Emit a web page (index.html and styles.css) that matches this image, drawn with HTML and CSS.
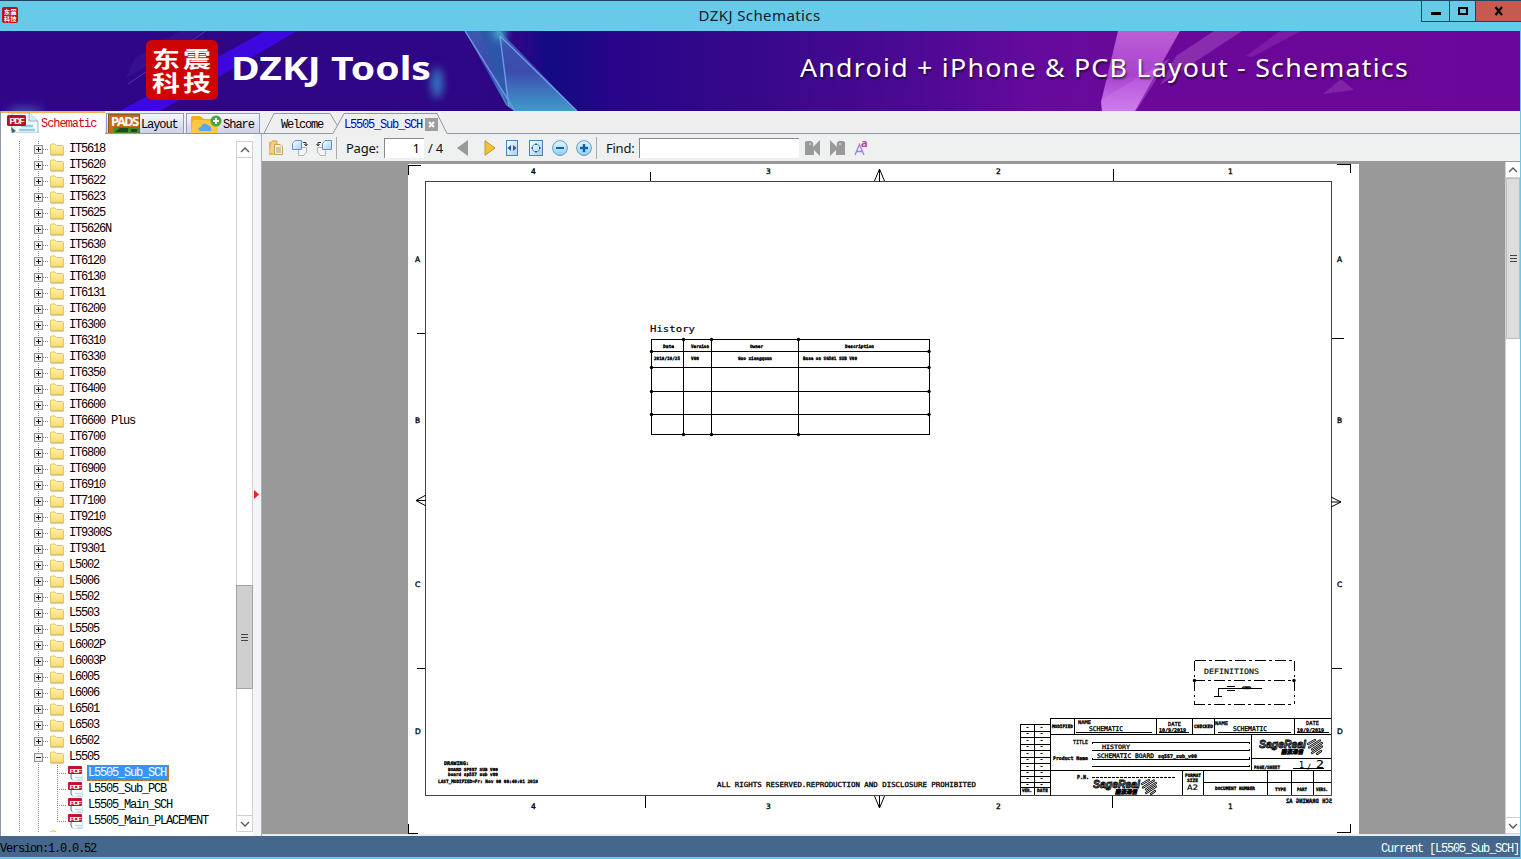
FILE: index.html
```html
<!DOCTYPE html>
<html lang="en">
<head>
<meta charset="utf-8">
<title>DZKJ Schematics</title>
<link rel="stylesheet" href="styles.css">
</head>
<body>
<svg class="defs" width="0" height="0">
  <defs>
    <linearGradient id="gold" x1="0" y1="0" x2="0" y2="1"><stop offset="0" stop-color="#fff0a8"/><stop offset="1" stop-color="#f5d878"/></linearGradient>
    <linearGradient id="ball" x1="0" y1="0" x2="0" y2="1"><stop offset="0" stop-color="#e8f6ff"/><stop offset="1" stop-color="#8fcdf5"/></linearGradient>
    <linearGradient id="paper" x1="0" y1="0" x2="1" y2="1"><stop offset="0" stop-color="#fff"/><stop offset="1" stop-color="#9fd0f5"/></linearGradient>
    <symbol id="folder" viewBox="0 0 14 12"><path d="M.5 1.5Q.5.5 1.500.5H5L6.500 2H13Q13.500 2 13.500 3V11.500H.5Z" fill="url(#gold)" stroke="#e6c566"/><path d="M1 11.500H13.500" stroke="#d9b355"/></symbol>
    <symbol id="plus" viewBox="0 0 9 9"><rect x=".5" y=".5" width="8" height="8" fill="#eee" stroke="#919191"/><path d="M2 4.500H7M4.500 2V7" stroke="#222"/></symbol>
    <symbol id="minus" viewBox="0 0 9 9"><rect x=".5" y=".5" width="8" height="8" fill="#eee" stroke="#919191"/><path d="M2 4.500H7" stroke="#222"/></symbol>
    <symbol id="pdf" viewBox="0 0 16 16"><path d="M4.500 8V15.500H15.500V3" fill="#fff" stroke="#d5e9f3"/><path d="M8 12.500H15M10 15H15" stroke="#b5daec" stroke-width="1.500"/><path d="M4 9V13L5.500 14.500" stroke="#5b7896" fill="none"/><rect x="1" y="1" width="14" height="8" rx="1" fill="#c4122c"/><text x="2.500" y="7.500" class="pdf-s" textLength="11" lengthAdjust="spacingAndGlyphs">PDF</text></symbol>
    <symbol id="sage" viewBox="0 0 64 16"><text x="0" y="9" class="sage" textLength="47" lengthAdjust="spacingAndGlyphs">SageReal</text><text x="22" y="15" class="sage-cn" textLength="22" lengthAdjust="spacingAndGlyphs">酷派通信</text><g fill="none" stroke="#000" stroke-linecap="round"><path d="M49 5L56 1M50 8.500L61 1.500M53 10.500L63 4M53 14L63 7.500M58 15L62 12" stroke-width="2.200"/><path d="M49 5L56 1M50 8.500L61 1.500M53 10.500L63 4M53 14L63 7.500M58 15L62 12" stroke="#fff" stroke-width=".8"/></g></symbol>
  </defs>
</svg>

<div class="window">
  <header class="titlebar">
    <svg class="app-icon" viewBox="0 0 16 16"><rect width="16" height="16" rx="2" fill="#c80b0b"/><g class="seal-s"><text x="2" y="7.300">东</text><text x="8.500" y="7.300">震</text><text x="2" y="13.800">科</text><text x="8.500" y="13.800">技</text></g></svg>
    <span class="caption">DZKJ Schematics</span>
    <div class="win-btns">
      <span class="wb min"><svg width="12" height="12"><rect x="1" y="7" width="10" height="3"/></svg></span>
      <span class="wb max"><svg width="12" height="12"><rect x="2" y="3" width="8" height="6" fill="none" stroke="#000" stroke-width="2"/></svg></span>
      <span class="wb close"><svg width="12" height="12"><path d="M2.500 2L9 10M9 2L2.500 10" stroke="#000" stroke-width="2.200"/></svg></span>
    </div>
  </header>

  <svg class="banner" viewBox="0 31 1520 80">
    <defs>
      <linearGradient id="bg"><stop offset="0" stop-color="#300687"/><stop offset=".34" stop-color="#2d0686"/><stop offset=".36" stop-color="#140a84"/><stop offset=".38" stop-color="#1a0984"/><stop offset=".4" stop-color="#27048a"/><stop offset=".49" stop-color="#360889"/><stop offset=".6" stop-color="#4c0993"/><stop offset=".68" stop-color="#650a9c"/><stop offset=".76" stop-color="#6b0899"/><stop offset="1" stop-color="#6a0699"/></linearGradient>
      <linearGradient id="crys" x1="0" y1="0" x2="0" y2="1"><stop offset="0" stop-color="#3c58b0"/><stop offset=".5" stop-color="#3b4bae"/><stop offset="1" stop-color="#3f9cc9"/></linearGradient>
      <linearGradient id="pink" x1="0" y1="0" x2="0" y2="1"><stop offset="0" stop-color="#bb5ed3"/><stop offset=".55" stop-color="#a942cf"/><stop offset="1" stop-color="#ca78ee"/></linearGradient>
      <filter id="soft" x="-2" y="-2" width="5" height="5"><feGaussianBlur stdDeviation="4"/></filter>
    </defs>
    <rect y="31" width="1521" height="80" fill="url(#bg)"/>
    <path d="M120 111L265 31H297L160 111Z" fill="#3c08df"/>
    <path d="M135 58L180 31H206L126 78Z" fill="#42229b" opacity=".35"/>
    <path d="M128 84L206 31" stroke="#635bc2" opacity=".6"/>
    <ellipse cx="437" cy="83" rx="6" ry="15" fill="#3477c1" filter="url(#soft)"/>
    <ellipse cx="25" cy="112" rx="18" ry="5" fill="#3d4fa7" filter="url(#soft)"/>
    <path d="M465 31H500L577 111H514L506 105Z" fill="url(#crys)"/>
    <path d="M480 31H500L504 78L508 107Z" fill="#285aa6" opacity=".75"/>
    <path d="M465 31L515 111M500 36L577 111M500 36L509 107" stroke="#7298e4" fill="none" stroke-width="1.400"/>
    <circle cx="500" cy="33" r="6" fill="#55c1dc" filter="url(#soft)"/>
    <path d="M1118 31H1180L1135 111H1102L1101 102Z" fill="url(#pink)"/>
    <path d="M1176 56L1214 31H1242L1160 85Z" fill="#9338b5" opacity=".75"/>
    <path d="M1246 56L1280 31H1301L1252 57Z" fill="#8524ae" opacity=".7"/>
    <path d="M1323 94L1341 79L1354 90Z" fill="#8931ac" opacity=".7"/>
    <path d="M1101 100L1170 58L1136 111H1102Z" fill="#d181ed" opacity=".32"/>
    <rect x="146" y="40" width="72" height="60" rx="6" fill="#ce0404"/>
    <g class="seal"><text x="152" y="67" textLength="28" lengthAdjust="spacingAndGlyphs">东</text><text x="183" y="67" textLength="28" lengthAdjust="spacingAndGlyphs">震</text><text x="152" y="91" textLength="28" lengthAdjust="spacingAndGlyphs">科</text><text x="183" y="91" textLength="28" lengthAdjust="spacingAndGlyphs">技</text></g>
    <text x="231" y="80" class="brand" textLength="200" lengthAdjust="spacingAndGlyphs">DZKJ Tools</text>
    <text x="800" y="76.500" class="slogan" textLength="609" lengthAdjust="spacingAndGlyphs">Android + iPhone &amp; PCB Layout - Schematics</text>
  </svg>

  <div class="main">
    <aside class="side">
      <nav class="tabs">
        <div class="tab on"><svg width="32" height="20" viewBox="0 0 32 20"><path d="M5 0H22L31 8V20H5Z" fill="#f2fafd" stroke="#9ab6ca"/><path d="M22 0V8H31" fill="#d6eaf5" stroke="#9ab6ca"/><path d="M14 13H26M12 17H28" stroke="#94cbe8" stroke-width="2.500"/><path d="M4 14L9 18L5 20Z" fill="#3d607d"/><rect y="2" width="19" height="11" rx="1.500" fill="#b8122b"/><text x="2.500" y="11" class="pdf-l" textLength="14" lengthAdjust="spacingAndGlyphs">PDF</text></svg><span>Schematic</span></div>
        <div class="tab lay"><svg width="32" height="19" viewBox="0 0 32 19"><rect x=".5" y=".5" width="31" height="20" fill="#c46a1c" stroke="#8d5719"/><rect x="6" y="13" width="25" height="6" fill="#3f8e2c"/><path d="M7 18L12 14H20V18M23 15H29V18H23Z" fill="#20491c"/><text x="3" y="11.500" class="pads" textLength="27" lengthAdjust="spacingAndGlyphs">PADS</text></svg><span>Layout</span></div>
        <div class="tab shr"><svg width="32" height="19" viewBox="0 0 32 19"><path d="M1 4Q1 2 3 2H10L14 5H28V19H1Z" fill="#f3ad20"/><path d="M1 19L3 6H15L28 8V19Z" fill="#ffc843"/><path d="M10 17Q6 14 11 13Q13 7 18 11Q22 12 21 17Z" fill="#5aa8ec"/><circle cx="26" cy="7" r="5.500" fill="#45a83c"/><path d="M23 7H29M26 4V10" stroke="#fff" stroke-width="2"/></svg><span>Share</span></div>
      </nav>
      <div class="side-body">
        <div class="tree" id="tree"></div>
        <div class="sbar">
          <span class="arr"><svg width="10" height="6"><path d="M1 5L5 1L9 5" fill="none" stroke="#555" stroke-width="1.300"/></svg></span>
          <span class="side-thumb"><i></i><i></i><i></i></span>
          <span class="arr low"><svg width="10" height="6"><path d="M1 1L5 5L9 1" fill="none" stroke="#555" stroke-width="1.300"/></svg></span>
        </div>
      </div>
    </aside>
    <div class="splitter"><svg width="5" height="9"><path d="M0 0L5 4.500L0 9Z" fill="#e8231c"/></svg></div>

    <section class="view">
      <div class="doc-tabs">
        <svg class="tab-lines" viewBox="0 0 1258 23"><path d="M0 22.500H2L12 2.500H68L75 14M2 22.500H71L82 2.500H175L185 22.500H1258" fill="none" stroke="#8d9ba9"/></svg>
        <span class="dt">Welcome</span><span class="dt cur">L5505_Sub_SCH</span>
        <svg class="x" width="13" height="13"><rect width="13" height="13" fill="#9e9e9e"/><path d="M4 4L9 9M9 4L4 9" stroke="#fff" stroke-width="1.800"/></svg>
      </div>
      <div class="toolbar">
        <svg width="16" height="16" viewBox="0 0 16 16"><path d="M1 2L6 1V14L1 15Z" fill="#e5b456"/><path d="M4 1H9V14H1" fill="#f4cf7e" stroke="#d6a24b"/><path d="M6.500 4.500H12L14.500 7V14.500H6.500Z" fill="#fdf3d0" stroke="#c99e50"/><path d="M8 8H13M8 10H13M8 12H13" stroke="#9a9a8a"/></svg>
        <svg class="g8" width="16" height="16" viewBox="0 0 16 16"><path d="M6.500 7.500H14.500V12L11.500 15.500H6.500Z" fill="#f4f4f4" stroke="#b4b4b4"/><path d="M.5 3.500L3 .5H9.500V9.500H.5Z" fill="url(#paper)" stroke="#6790be"/><path d="M11 2.500H14V5M12.500 4L14 6L15.500 4" stroke="#333" fill="none"/></svg>
        <svg class="g8" width="16" height="16" viewBox="0 0 16 16"><path d="M1.500 7.500H9.500V15.500H4.500L1.500 12Z" fill="#f4f4f4" stroke="#b4b4b4"/><path d="M6.500 3.500L9 .5H15.500V9.500H6.500Z" fill="url(#paper)" stroke="#6790be"/><path d="M5 2.500H2V5M.5 4L2 6L3.500 4" stroke="#333" fill="none"/></svg>
        <i class="sep s1"></i><span class="lbl page">Page:</span><span class="inp pg">1</span><span class="lbl of">/ 4</span>
        <svg class="pv" width="12" height="16"><path d="M11 0V16L0 8Z" fill="#999"/></svg>
        <svg class="nx" width="12" height="16"><path d="M1 .7V15.300L11 8Z" fill="#f0c23c" stroke="#c79530"/></svg>
        <svg class="fw" width="12" height="16"><rect x=".5" y=".5" width="11" height="15" fill="url(#paper)" stroke="#5080b5"/><path d="M5 5V11L1.500 8ZM7 5V11L10.500 8Z" fill="#245e9c"/></svg>
        <svg class="fp" width="14" height="16"><rect x=".5" y=".5" width="13" height="15" fill="url(#paper)" stroke="#5080b5"/><path d="M7 3L9 5H5ZM7 13L9 11H5ZM2 8L4 6V10ZM12 8L10 6V10Z" fill="#245e9c"/><path d="M4 5.500V5H4.500M9.500 5H10V5.500M10 10.500V11H9.500M4.500 11H4V10.500" fill="none" stroke="#245e9c"/></svg>
        <svg class="zo" width="16" height="16"><circle cx="8" cy="8" r="7.400" fill="url(#ball)" stroke="#5f9dc4"/><path d="M4 8H12" stroke="#1063a5" stroke-width="2"/></svg>
        <svg class="g8" width="16" height="16"><circle cx="8" cy="8" r="7.400" fill="url(#ball)" stroke="#5f9dc4"/><path d="M4 8H12M8 4V12" stroke="#1063a5" stroke-width="2.400"/></svg>
        <i class="sep s2"></i><span class="lbl find">Find:</span><span class="inp fi"></span>
        <svg class="fl" width="15" height="16"><path d="M0 2L2 1H6Q9 2 8 7L15 0V16L9 10V15H0Z" fill="#999"/><path d="M4 4H6" stroke="#eee"/></svg>
        <svg class="fr" width="15" height="16"><path d="M15 2L13 1H9Q6 2 7 7L0 0V16L6 10V15H15Z" fill="#999"/><path d="M9 4H11" stroke="#eee"/></svg>
        <svg class="aa" width="14" height="16" viewBox="0 0 14 16"><path d="M1 15L5.500 4.500L10 15M2.500 11.500H8.500" fill="none" stroke="#9b7df0" stroke-width="1.300"/><text x="7" y="7" class="aa-t">a</text></svg>
      </div>
      <div class="canvas">
        <svg class="sheet" viewBox="408 164 951 670">
          <rect x="408" y="164" width="951" height="670" fill="#fff"/>
          <g fill="none" stroke="#000" shape-rendering="crispEdges">
            <rect x="425.500" y="181.500" width="906" height="614" stroke="#444"/>
            <path d="M408.500 175V165.500H421M1337 164.500H1350.500V173M408.500 824V833.500H418M1337 832.500H1350.500V824"/>
            <path d="M650.500 172V181M1113.500 169V181M645.500 796V808M1112.500 796V808M417 333.500H425M417 668.500H425M1332 338.500H1344M1332 668.500H1342"/>
            <path d="M651.500 339.500H929.500V434.500H651.500ZM651 351.500H929M651 367.500H929M651 391.500H929M651 414.500H929M683.500 339V434M711.500 339V434M798.500 339V434"/>
          </g>
          <g fill="none" stroke="#000"><path d="M874.500 181L879.500 169L884.500 181M879.500 169V182M874.500 796L879.500 808L884.500 796M879.500 796V808M426 495L416 500.500L426 506M416 500.500H426M1331 497L1341 502L1331 507M1331 502H1341"/></g>
          <g id="dots"></g>
          <g class="grid-n"><text x="531" y="174">4</text><text x="766" y="174">3</text><text x="996" y="174">2</text><text x="1228" y="174">1</text><text x="531" y="809">4</text><text x="766" y="809">3</text><text x="996" y="809">2</text><text x="1228" y="809">1</text><text x="415" y="262">A</text><text x="415" y="423">B</text><text x="415" y="587">C</text><text x="415" y="734">D</text><text x="1337" y="262">A</text><text x="1337" y="423">B</text><text x="1337" y="587">C</text><text x="1337" y="734">D</text></g>
          <g id="labels"></g>
          <g fill="none" stroke="#000" shape-rendering="crispEdges">
            <path d="M1194.500 660.500H1294M1194 680.500H1294M1194 704.500H1294" stroke-dasharray="11 3 3 3"/>
            <path d="M1194.500 661V704M1294.500 661V704" stroke-dasharray="10 4 2 4"/>
            <path d="M1218.500 696V688.500H1262M1214 696.500H1222M1227 686.500H1235M1227 690.500H1235"/>
            <path d="M1020.500 795V724.500H1050M1034.500 724V795M1020 731.500H1050M1020 737.500H1050M1020 744.500H1050M1020 750.500H1050M1020 757.500H1050M1020 763.500H1050M1020 770.500H1050M1020 776.500H1050M1020 782.500H1050M1020 787.500H1050M1050.500 718V796M1050 718.500H1331M1050 734.500H1331M1050 770.500H1331M1074.500 718V734M1156.500 718V734M1192.500 718V734M1214.500 718V734M1294.500 718V734M1251.500 734V770M1251 758.500H1331M1182.500 770V795M1203.500 770V795M1204 782.500H1331M1267.500 770V795M1291.500 770V795M1313.500 770V795"/>
            <path d="M1076 732.500H1152M1159 732.500H1189M1218 732.500H1291M1297 732.500H1329M1092 743.500V742.500H1249V744M1092 751V750.500H1249V749M1092 758V759.500H1249V757M1092 766.500H1249V765M1293 768.500H1324"/>
            <path d="M1092 777.500H1176" stroke-dasharray="3 1"/>
          </g>
          <use href="#sage" x="1259" y="739" width="64" height="16"/><use href="#sage" x="1093" y="779" width="64" height="16"/>
          <g transform="translate(1332 803) scale(-1 1)"><text y="0" class="cad heavy" font-size="6" textLength="46" lengthAdjust="spacingAndGlyphs">SCH DRAWING A2</text></g>
        </svg>
        <div class="vbar">
          <span class="arr"><svg width="10" height="6"><path d="M1 5L5 1L9 5" fill="none" stroke="#555" stroke-width="1.300"/></svg></span>
          <span class="doc-thumb"><i></i><i></i><i></i></span>
          <span class="arr low"><svg width="10" height="6"><path d="M1 1L5 5L9 1" fill="none" stroke="#555" stroke-width="1.300"/></svg></span>
        </div>
      </div>
    </section>
  </div>
  <footer class="status"><span>Version:1.0.0.52</span><span>Current [L5505_Sub_SCH]</span></footer>
</div>
<script src="app.js"></script>
</body>
</html>
```
FILE: styles.css
```css
* { box-sizing: border-box; }
body { margin: 0; overflow: hidden; background: #67cae9; }
svg { display: block; flex: none; }
.defs { position: absolute; }
.window { width: 1521px; height: 859px; display: flex; flex-direction: column; padding-right: 1px; padding-bottom: 2px; background: #67cae9; }

.titlebar { position: relative; height: 31px; flex: none; display: flex; justify-content: space-between; border-top: 1px solid #1c4660; background: #67cae9; margin-right: -1px; }
.app-icon { width: 16px; height: 16px; margin: 6px 0 0 2px; }
.seal-s { font: bold 6px "Noto Sans CJK SC", sans-serif; fill: #fff; }
.caption { font: 15px/28px "Noto Sans", sans-serif; letter-spacing: .4px; color: #10202a; margin-left: 80px; }
.win-btns { display: flex; height: 21px; border-left: 1px solid #184558; border-bottom: 1px solid #184558; }
.wb { display: flex; align-items: center; justify-content: center; width: 28px; border-right: 1px solid #184558; }
.wb.max { width: 26px; }
.wb.close { width: 45px; border: 0; background: #c75a50; }

.banner { width: 1520px; height: 80px; flex: none; }
.seal { font: bold 22px "Noto Sans CJK SC", sans-serif; fill: #fff; }
.brand { font: bold 32px "Noto Sans", sans-serif; fill: #fff; }
.slogan { font: 26px "Noto Sans", sans-serif; letter-spacing: 1.2px; fill: #fff; text-shadow: 1px 2px 2px rgba(0, 0, 0, .6); }

.main { flex: 1; min-height: 0; display: flex; background: #efefef; }
.side { width: 253px; display: flex; flex-direction: column; background: #fff; border-left: 1px solid #8d9ba9; }
.tabs { height: 23px; flex: none; display: flex; width: 261px; background: #efefef; border-bottom: 1px solid #8d9ba9; }
.tab, .dt, .tree, .status { font: 12px/16px "Liberation Mono", monospace; letter-spacing: -1.2px; white-space: pre; color: #000; }
.tab { display: flex; align-items: center; height: 20px; margin-top: 2px; border: 1px solid #8f9ab8; border-bottom: 0; background: linear-gradient(#f7f7fc, #cfd1e6); }
.tab svg { align-self: flex-start; }
.tab span { padding-top: 2px; }
.tab.on { width: 104px; height: 23px; margin: 0; padding-left: 6px; border: 0; border-top: 2px solid #f5b04d; background: #fff; color: #d0021b; }
.tab.on span { margin-left: 2px; letter-spacing: -1.05px; padding: 0; }
.tab.lay { width: 78px; padding-left: 1px; margin-left: 1px; }
.tab.lay span { margin-left: 1px; letter-spacing: -1.1px; }
.tab.shr { width: 74px; margin-left: 2px; padding-left: 3px; }
.tab.shr span { margin-left: 1px; letter-spacing: -1px; }
.pdf-s { font: bold 6px "Liberation Sans", sans-serif; fill: #fff; }
.pdf-l { font: bold 9px "Liberation Sans", sans-serif; fill: #fff; }
.pads { font: bold 11.5px "Noto Sans", sans-serif; fill: #fff; }

.side-body { flex: 1; min-height: 0; display: flex; padding: 7px 0 4px 6px; }
.tree { flex: 1; height: 691px; overflow: hidden; background: repeating-linear-gradient(#8a8a8a 0 1px, transparent 1px 2px) 12px 0 / 1px 100% no-repeat, repeating-linear-gradient(#8a8a8a 0 1px, transparent 1px 2px) 31px 0 / 1px 100% no-repeat; }
.row { display: flex; align-items: center; height: 16px; padding-left: 27px; }
.row .box { width: 9px; height: 9px; }
.row .lead { width: 5px; margin-right: 2px; border-top: 1px dotted #8a8a8a; }
.row .fold { width: 14px; height: 13px; }
.row b { font-weight: normal; margin-left: 4px; height: 16px; padding: 1px 1px 0; line-height: 15px; }
.row.leaf { padding-left: 50px; }
.row.leaf .lead { width: 10px; height: 16px; margin: 0; border: 0; background: repeating-linear-gradient(#8a8a8a 0 1px, transparent 1px 2px) 0 0 / 1px 100% no-repeat, repeating-linear-gradient(90deg, #8a8a8a 0 1px, transparent 1px 2px) 0 8px / 100% 1px no-repeat; }
.row.leaf.last .lead { background-size: 1px 9px, 100% 1px; }
.row .pdf { width: 16px; height: 16px; }
.row.leaf b { margin-left: 4px; padding-left: 1px; }
.row.sel b { width: 82px; background: #3296fb; color: #fff; outline: 1px dotted #c4711b; outline-offset: -1px; }
.row.cut { align-items: flex-start; }
.row.cut .fold { margin: 1px 0 0 16px; }

.sbar, .vbar { display: flex; flex-direction: column; align-items: center; background: #fff; border: 1px solid #d2d2d2; }
.sbar { width: 17px; height: 691px; }
.arr { width: 100%; height: 16px; flex: none; display: flex; align-items: center; justify-content: center; border-bottom: 1px solid #cfcfcf; }
.arr.low { margin-top: auto; border-bottom: 0; border-top: 1px solid #cfcfcf; }
.side-thumb, .doc-thumb { display: flex; flex-direction: column; justify-content: center; align-items: center; gap: 2px; background: #dcdcdc; border: 1px solid #bdbdbd; }
.side-thumb { width: 17px; height: 104px; margin-top: 427px; background: #cfcfcf; border-color: #a3a3a3; flex: none; }
.side-thumb i, .doc-thumb i { width: 7px; height: 1px; background: #444; }
.splitter { width: 9px; background: #f4f5f8; border-right: 1px solid #a7b0bb; padding: 356px 0 0 1px; margin-top: 23px; }

.view { flex: 1; display: flex; flex-direction: column; min-width: 0; }
.doc-tabs { position: relative; height: 23px; flex: none; display: flex; align-items: center; padding: 3px 0 0 19px; }
.tab-lines { position: absolute; left: 0; top: 0; width: 1258px; height: 23px; }
.dt { width: 63px; position: relative; padding-top: 1px; }
.dt.cur { width: 81px; color: #0000d0; }
.x { position: relative; margin-top: 1px; }
.toolbar { height: 28px; flex: none; display: flex; align-items: center; padding: 1px 0 0 6px; border-bottom: 1px solid #999; background: #eff0f0; }
.lbl { font: 13px/18px "Noto Sans", sans-serif; letter-spacing: -.25px; color: #111; white-space: nowrap; }
.toolbar > * { flex: none; }
.g8 { margin-left: 8px; }
.sep { width: 1px; height: 22px; background: #aaa; }
.s1 { margin-left: 4px; }
.page { margin-left: 9px; width: 38px; }
.inp { height: 20px; background: #fff; border-top: 1px solid #888; border-left: 1px solid #888; }
.pg { width: 40px; text-align: right; padding-right: 4px; font: 13px/18px "Noto Sans", sans-serif; }
.of { margin-left: 4px; width: 29px; }
.nx { margin-left: 15px; }
.fw { margin-left: 10px; }
.fp { margin-left: 11px; }
.zo { margin-left: 9px; }
.s2 { margin-left: 4px; }
.find { margin-left: 9px; width: 33px; }
.fi { width: 160px; }
.fl { margin-left: 6px; }
.fr { margin-left: 10px; }
.aa { margin-left: 9px; overflow: visible; }
.aa-t { font: bold 11px "Noto Sans", sans-serif; fill: #bb3f9c; }

.canvas { flex: 1; min-height: 0; display: flex; justify-content: space-between; background: #999; border-bottom: 2px solid #e6edf3; }
.sheet { width: 951px; height: 670px; margin: 2px 0 0 146px; }
.vbar { width: 15px; border-top: 0; border-right: 0; }
.doc-thumb { width: 14px; height: 161px; flex: none; }
.grid-n { font: 7.5px "DejaVu Sans", sans-serif; stroke: #000; stroke-width: .35px; }
.cad { font-family: "DejaVu Sans Mono", monospace; fill: #000; stroke: #000; stroke-width: .3px; }
.cad.light { stroke-width: .15px; }
.cad.heavy { font-weight: bold; stroke-width: .35px; }
.sage { font: italic bold 11px "Liberation Sans", sans-serif; fill: #888; stroke: #000; stroke-width: .8px; }
.sage-cn { font: italic bold 6px "Noto Sans CJK SC", sans-serif; stroke: #000; stroke-width: .5px; }

.status { height: 21px; flex: none; display: flex; justify-content: space-between; align-items: center; background: #45678b; padding: 5px 1px 0 0; }
.status span + span { color: #fff; }
```
FILE: app.js
```js
const svg = (id, cls) => `<svg class="${cls}"><use href="#${id}"/></svg>`;

const folders = ['5618', '5620', '5622', '5623', '5625', '5626N', '5630', '6120', '6130', '6131', '6200', '6300', '6310', '6330', '6350', '6400', '6600', '6600 Plus', '6700', '6800', '6900', '6910', '7100', '9210', '9300S', '9301'].map(n => 'IT' + n)
  .concat(['5002', '5006', '5502', '5503', '5505', '6002P', '6003P', '6005', '6006', '6501', '6503', '6502', '5505'].map(n => 'L' + n));
const files = ['L5505_Sub_SCH', 'L5505_Sub_PCB', 'L5505_Main_SCH', 'L5505_Main_PLACEMENT'];

document.getElementById('tree').innerHTML =
  folders.map((n, i) => `<div class="row">${svg(i === folders.length - 1 ? 'minus' : 'plus', 'box')}<i class="lead"></i>${svg('folder', 'fold')}<b>${n}</b></div>`).join('') +
  files.map((n, i) => `<div class="row leaf${i === 0 ? ' sel' : ''}${i === 3 ? ' last' : ''}"><i class="lead"></i>${svg('pdf', 'pdf')}<b>${n}</b></div>`).join('') +
  `<div class="row cut">${svg('folder', 'fold')}</div>`;

// [text, x, baseline, width, size, weight class]
const labels = [
  ['History', 650, 332, 45, 8.5, 'light'],
  ['Date', 663, 348, 11, 4.5, 'heavy'], ['Version', 691, 348, 18, 4.5, 'heavy'], ['Owner', 750, 348, 13, 4.5, 'heavy'], ['Description', 845, 348, 29, 4.5, 'heavy'],
  ['2018/10/25', 654, 360, 26, 4.5, 'heavy'], ['V00', 691, 360, 8, 4.5, 'heavy'], ['Guo xiangquan', 738, 360, 34, 4.5, 'heavy'], ['Base on SG581 SUB V00', 803, 360, 54, 4.5, 'heavy'],
  ['DEFINITIONS', 1204, 674, 55, 7.5, 'light'], ['GND', 1242, 688.5, 9, 3.5, 'heavy'],
  ['DRAWING:', 444, 765, 25, 5, 'heavy'], ['BOARD SP557 SUB V00', 448, 771, 50, 4.2, 'heavy'], ['board sp557 sub v00', 448, 775.5, 50, 4.5, 'heavy'],
  ['LAST_MODIFIED=Fr: Nov 08 08:40:01 2019', 438, 783, 100, 4.5, 'heavy'],
  ['ALL RIGHTS RESERVED.REPRODUCTION AND DISCLOSURE PROHIBITED', 717, 787, 259, 7, ''],
  ['MODIFIED', 1052, 728, 21, 4.5, 'heavy'], ['NAME', 1078, 724, 13, 5, ''], ['SCHEMATIC', 1089, 731, 34, 6.5, ''],
  ['DATE', 1168, 726, 13, 5.5, ''], ['10/9/2019', 1159, 731.5, 27, 5.2, 'heavy'],
  ['CHECKED', 1194, 728, 19, 4.5, 'heavy'], ['NAME', 1215, 725, 13, 5, ''], ['SCHEMATIC', 1233, 731, 34, 6.5, ''],
  ['DATE', 1306, 725, 13, 5.5, ''], ['10/9/2019', 1297, 731.5, 27, 5.2, 'heavy'],
  ['TITLE', 1073, 744, 15, 5.5, ''], ['HISTORY', 1102, 749, 28, 6, ''], ['Product Name', 1053, 760, 35, 5, 'heavy'],
  ['SCHEMATIC BOARD', 1097, 758, 57, 6.2, ''], ['sq557_sub_v00', 1158, 758, 39, 5, 'heavy'], ['P.N.', 1077, 779, 12, 5.5, 'heavy'],
  ['VER.', 1022, 792, 10, 4.5, 'heavy'], ['DATE', 1037, 792, 11, 4.5, 'heavy'], ['PAGE/SHEET', 1254, 769, 26, 4.5, 'heavy'],
  ['1', 1299, 768, 5, 8, 'light'], ['/', 1307, 769, 4, 7, 'light'], ['2', 1316, 768, 8, 10, 'light'],
  ['FORMAT', 1185, 777, 16, 4.5, 'heavy'], ['SIZE', 1187, 782, 11, 4.5, 'heavy'], ['A2', 1187, 790, 11, 7.5, 'light'],
  ['DOCUMENT NUMBER', 1215, 790, 40, 4.5, 'heavy'], ['TYPE', 1275, 791, 11, 4.5, 'heavy'], ['PART', 1297, 791, 10, 4.5, 'heavy'], ['VERS.', 1316, 791, 12, 4.5, 'heavy']
];
for (const y of [729, 735, 742, 748, 755, 761, 768, 774, 780, 786]) labels.push(['-', 1026, y, 3, 5, 'heavy'], ['-', 1040, y, 3, 5, 'heavy']);
document.getElementById('labels').innerHTML = labels.map(([t, x, y, w, s, c]) =>
  `<text x="${x}" y="${y}" class="cad ${c}" font-size="${s}" textLength="${w}" lengthAdjust="spacingAndGlyphs">${t}</text>`).join('');

const dots = [[683.5, 339.5], [711.5, 339.5], [798.5, 339.5], [683.5, 434.5], [711.5, 434.5], [798.5, 434.5], [1194.5, 680.5], [1294, 680.5]];
for (const y of [351.5, 367.5, 391.5, 414.5]) dots.push([651.5, y], [929, y]);
document.getElementById('dots').innerHTML = dots.map(([x, y]) => `<circle cx="${x}" cy="${y}" r="1.7"/>`).join('');
```
